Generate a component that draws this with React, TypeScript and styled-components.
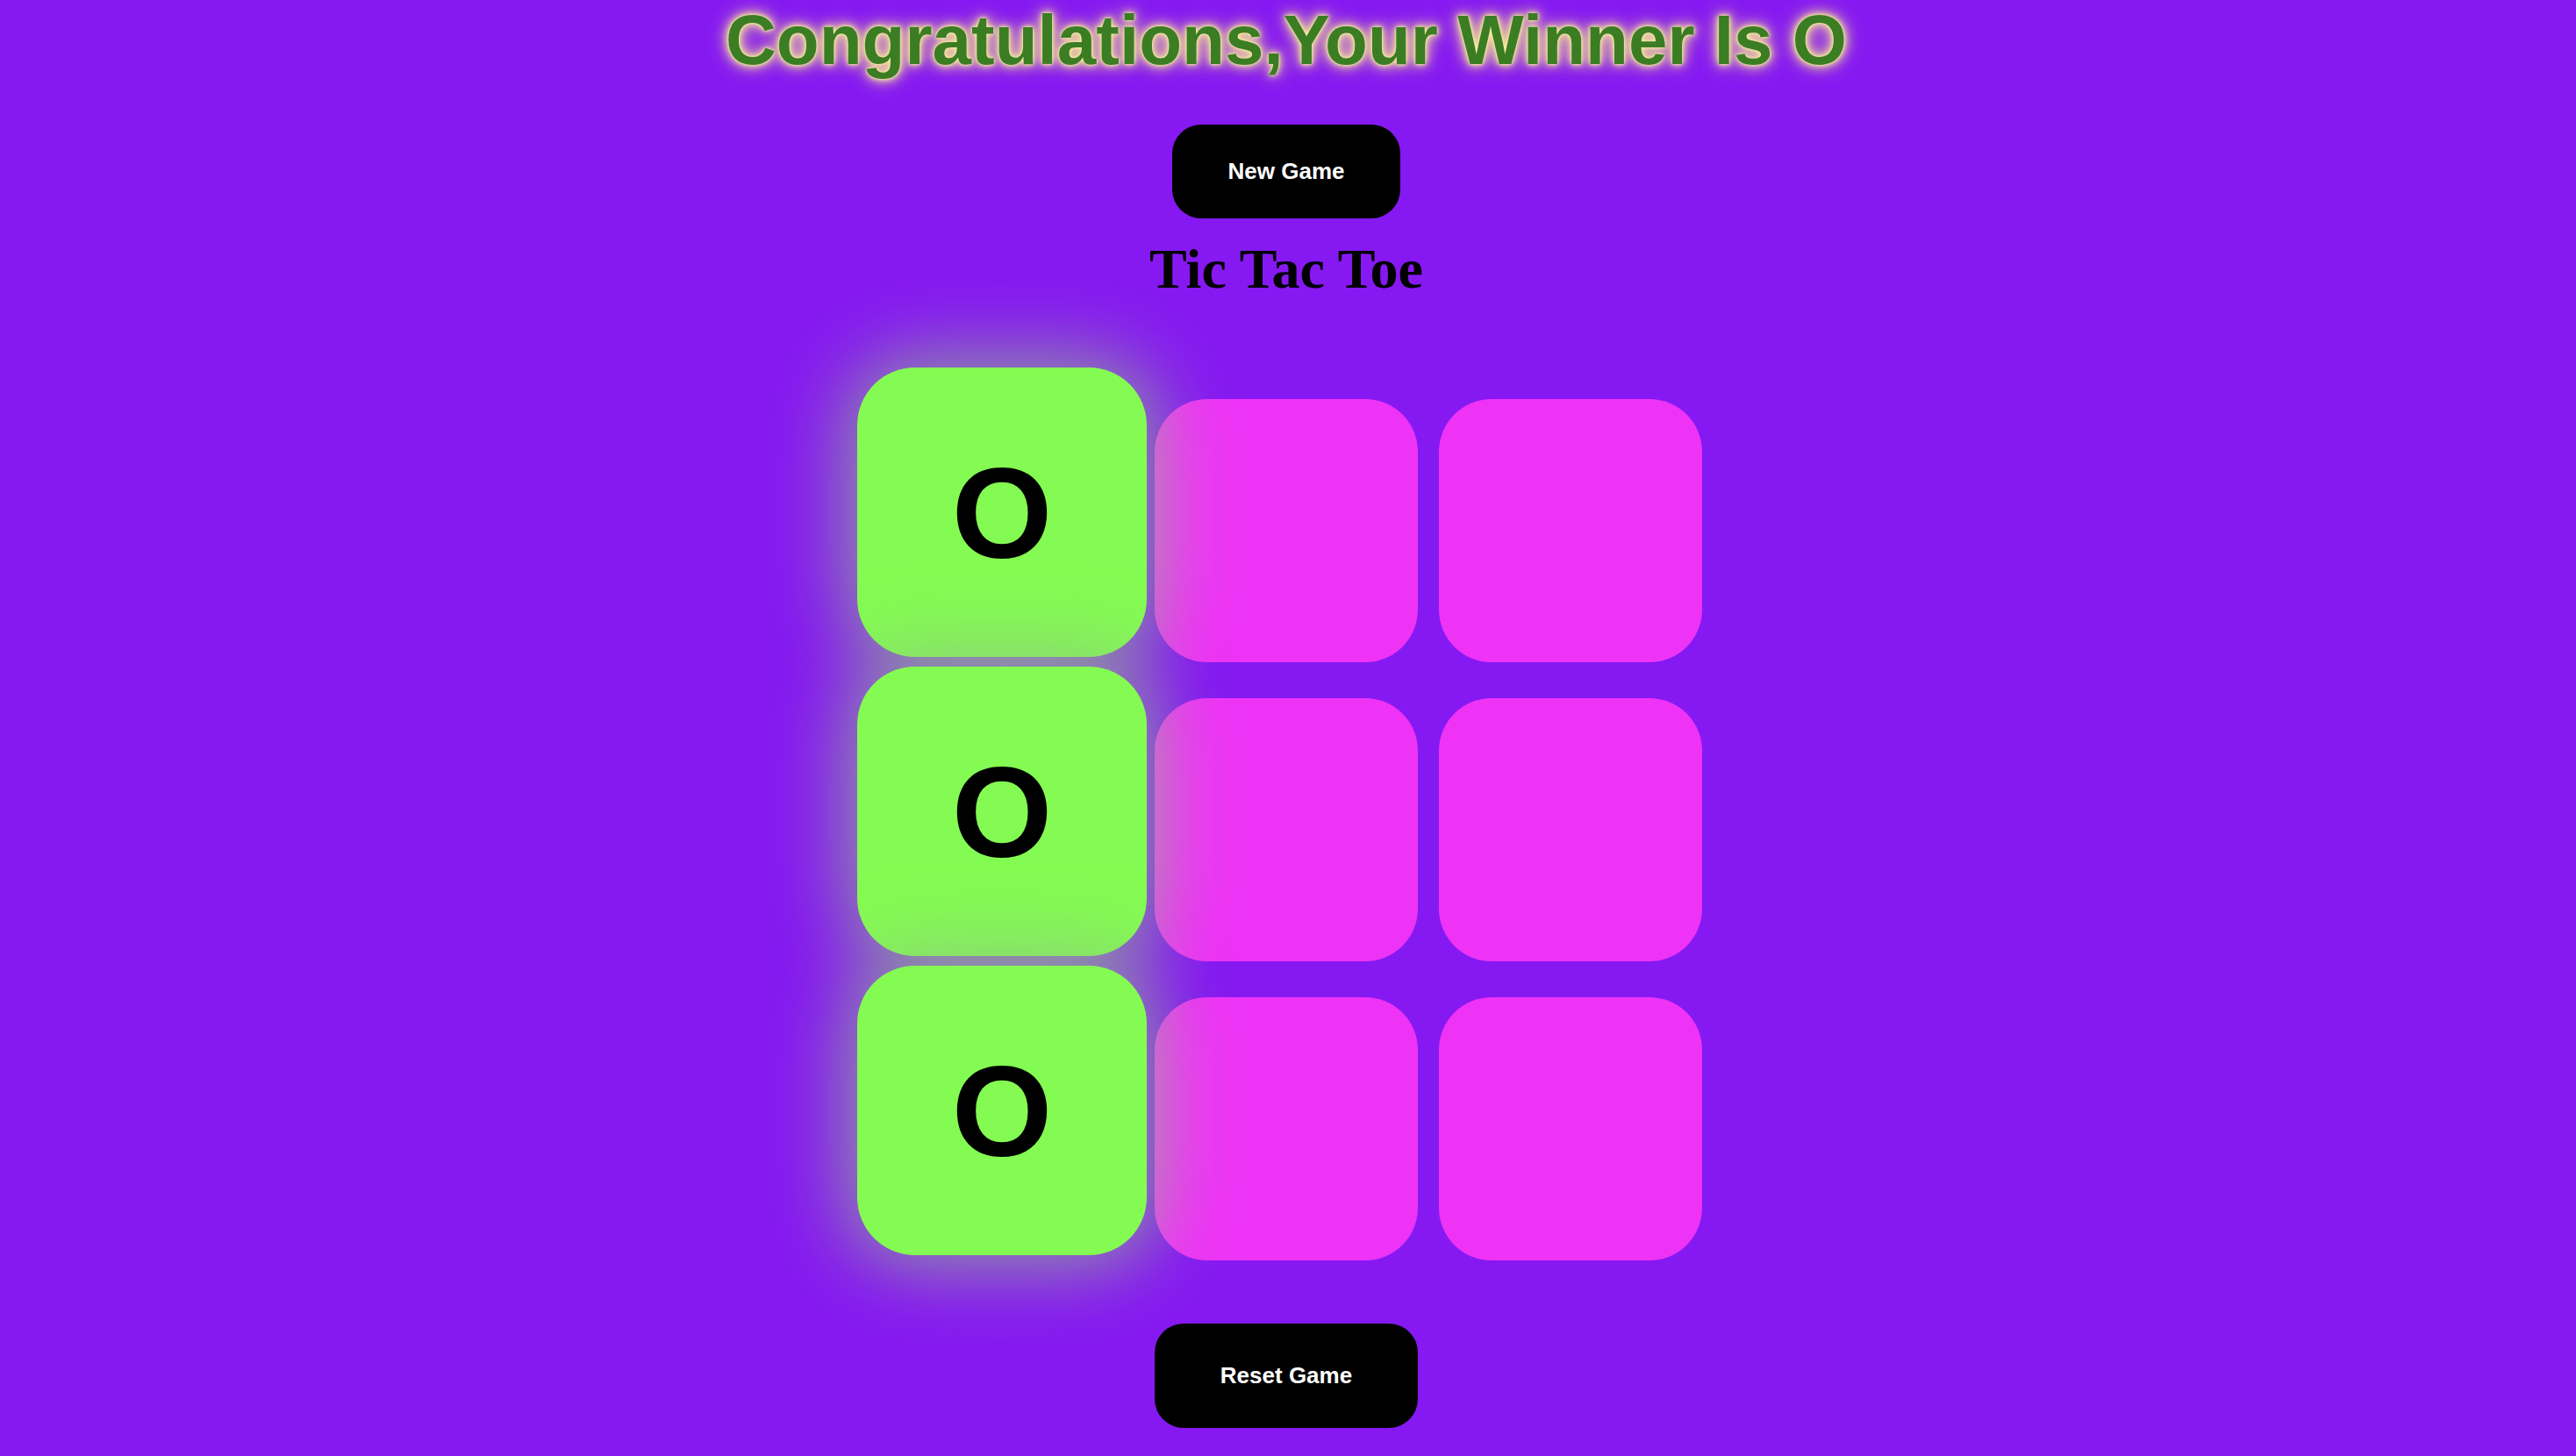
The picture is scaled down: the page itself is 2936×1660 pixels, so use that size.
import React from "react";
import styled, { createGlobalStyle } from "styled-components";

const GlobalStyle = createGlobalStyle`
  html, body {
    margin: 0;
    padding: 0;
    background: #8619f1;
  }
  body {
    font-family: "Liberation Sans", Arial, sans-serif;
  }
`;

const Page = styled.main`
  min-height: 1660px;
  padding-right: 4px;
  display: flex;
  flex-direction: column;
  align-items: center;
  box-sizing: border-box;
`;

const Winner = styled.h1`
  margin: 0;
  font-family: "Liberation Sans", Arial, sans-serif;
  font-size: 80px;
  line-height: 92px;
  font-weight: 700;
  color: #3b7d23;
  text-shadow: 0 0 3px #fff8b0, 0 0 7px #fcee9e, 0 0 14px #f4e196, 0 0 22px #ead08f;
`;

const ActionButton = styled.button<{ $w: number; $h: number; $top: number }>`
  margin-top: ${(p) => p.$top}px;
  width: ${(p) => p.$w}px;
  height: ${(p) => p.$h}px;
  border: none;
  border-radius: 33px;
  background: #000;
  color: #fff;
  font-family: "Liberation Sans", Arial, sans-serif;
  font-weight: 700;
  font-size: 26px;
  cursor: pointer;
`;

const Heading = styled.h2`
  margin: 21px 0 0;
  font-family: "Liberation Serif", "Times New Roman", serif;
  font-size: 64px;
  line-height: 74px;
  font-weight: 700;
  color: #000;
`;

const Board = styled.div`
  margin-top: 111px;
  display: grid;
  grid-template-columns: repeat(3, 300px);
  grid-auto-rows: 300px;
  column-gap: 24px;
  row-gap: 41px;
`;

const Cell = styled.div<{ $win: boolean }>`
  border-radius: 60px;
  background: ${(p) => (p.$win ? "#84fb52" : "#ee33f6")};
  display: flex;
  align-items: center;
  justify-content: center;
  font-family: "Liberation Sans", Arial, sans-serif;
  font-weight: 700;
  font-size: 134px;
  color: #000;
  transform: ${(p) => (p.$win ? "translateY(-21px) scale(1.1)" : "none")};
  box-shadow: ${(p) => (p.$win ? "0 0 80px 10px rgba(145, 190, 140, 0.8)" : "none")};
`;

const cells = ["O", "", "", "O", "", "", "O", "", ""];
const winLine = [0, 3, 6];

export default function App() {
  return (
    <>
      <GlobalStyle />
      <Page>
        <Winner>Congratulations,Your Winner Is O</Winner>
        <ActionButton $w={260} $h={107} $top={50}>New Game</ActionButton>
        <Heading>Tic Tac Toe</Heading>
        <Board>
          {cells.map((c, i) => (
            <Cell key={i} $win={winLine.includes(i)}>
              {c}
            </Cell>
          ))}
        </Board>
        <ActionButton $w={300} $h={119} $top={72}>Reset Game</ActionButton>
      </Page>
    </>
  );
}
